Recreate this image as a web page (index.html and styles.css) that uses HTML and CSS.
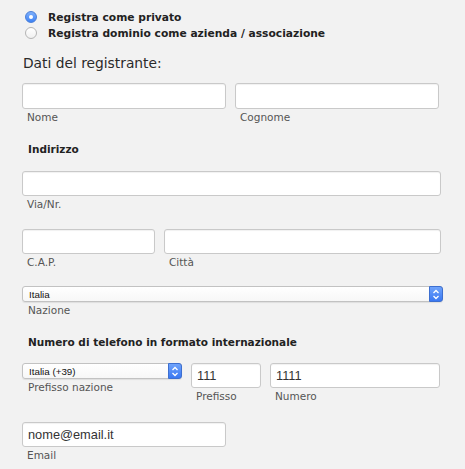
FILE: index.html
```html
<!DOCTYPE html>
<html lang="it">
<head>
<meta charset="utf-8">
<title>Registrazione</title>
<link rel="stylesheet" href="styles.css">
</head>
<body>
<form class="form">
  <div class="radios">
    <label class="radio-row"><span class="radio checked"></span><span class="radio-text">Registra come privato</span></label>
    <label class="radio-row"><span class="radio"></span><span class="radio-text">Registra dominio come azienda / associazione</span></label>
  </div>

  <h2 class="title">Dati del registrante:</h2>

  <div class="row row-names">
    <div class="field w-half"><div class="input"></div><div class="label">Nome</div></div>
    <div class="field w-half"><div class="input"></div><div class="label">Cognome</div></div>
  </div>

  <h3 class="section">Indirizzo</h3>

  <div class="row row-via">
    <div class="field w-full"><div class="input short"></div><div class="label">Via/Nr.</div></div>
  </div>

  <div class="row row-cap">
    <div class="field w-cap"><div class="input short"></div><div class="label">C.A.P.</div></div>
    <div class="field w-city"><div class="input short"></div><div class="label">Città</div></div>
  </div>

  <div class="row row-nation">
    <div class="field w-select">
      <div class="select"><span class="select-text">Italia</span><span class="select-btn"><svg width="8" height="11" viewBox="0 0 8 11"><path d="M1.5 4 L4 1.5 L6.5 4 M1.5 7 L4 9.5 L6.5 7" fill="none" stroke="#fff" stroke-width="1.3"/></svg></span></div>
      <div class="label label-sel">Nazione</div>
    </div>
  </div>

  <h3 class="section section-phone">Numero di telefono in formato internazionale</h3>

  <div class="row row-phone">
    <div class="field w-psel">
      <div class="select"><span class="select-text">Italia (+39)</span><span class="select-btn"><svg width="8" height="11" viewBox="0 0 8 11"><path d="M1.5 4 L4 1.5 L6.5 4 M1.5 7 L4 9.5 L6.5 7" fill="none" stroke="#fff" stroke-width="1.3"/></svg></span></div>
      <div class="label label-sel">Prefisso nazione</div>
    </div>
    <div class="field w-pref"><div class="input tall"><span class="value">111</span></div><div class="label">Prefisso</div></div>
    <div class="field w-num"><div class="input tall"><span class="value">1111</span></div><div class="label">Numero</div></div>
  </div>

  <div class="row row-email">
    <div class="field w-half"><div class="input short"><span class="value">nome@email.it</span></div><div class="label">Email</div></div>
  </div>
</form>
</body>
</html>
```
FILE: styles.css
```css
* { box-sizing: border-box; }
html, body { margin: 0; padding: 0; }
body {
  background: #f2f2f2;
  width: 465px;
  height: 469px;
  overflow: hidden;
  font-family: "DejaVu Sans", Verdana, sans-serif;
  color: #222;
}
.form { padding: 9px 0 0 22px; }

.radios { padding-left: 3px; }
.radio-row { display: flex; align-items: center; height: 16px; }
.radio {
  width: 12px; height: 12px; border-radius: 50%;
  background: linear-gradient(#ffffff, #f0f0f0);
  border: 1px solid #b5b5b5;
  margin-right: 11px;
  position: relative;
  flex: none;
}
.radio.checked {
  background: linear-gradient(#7fb0fb, #3d82f5);
  border-color: #4a7fd8;
}
.radio.checked::after {
  content: "";
  position: absolute;
  left: 3px; top: 3px;
  width: 4px; height: 4px;
  border-radius: 50%;
  background: #fff;
}
.radio-text { font-size: 10.7px; font-weight: bold; color: #222; }

.title {
  margin: 13px 0 0 1px;
  font-size: 13.8px;
  font-weight: normal;
  line-height: 18px;
  color: #2a2a2a;
}

.row { display: flex; }
.field { display: flex; flex-direction: column; flex: none; }
.w-half { width: 204px; }
.w-full { width: 419px; }
.w-cap { width: 133px; }
.w-city { width: 277px; }
.w-select { width: 421px; }
.w-psel { width: 160px; }
.w-pref { width: 70px; }
.w-num { width: 170px; }

.row-names { margin-top: 11px; gap: 9px; }
.row-via { margin-top: 15px; }
.row-cap { margin-top: 18px; gap: 9px; }
.row-nation { margin-top: 17px; }
.row-phone { margin-top: 14px; gap: 9px; }
.row-email { margin-top: 19px; }

.input {
  height: 26px;
  background: #fff;
  border: 1px solid #c9c9c9;
  border-radius: 3px;
  box-shadow: inset 0 1px 1px rgba(0,0,0,0.06);
  display: flex;
  align-items: center;
  padding-left: 5px;
}
.input.short { height: 25px; }
.input.tall { height: 25px; }
.value {
  font-family: "Liberation Sans", Arial, sans-serif;
  font-size: 12.8px;
  color: #333;
}

.label {
  font-size: 10.5px;
  color: #555;
  line-height: 14px;
  margin-top: 1px;
  padding-left: 5px;
}
.label-sel { margin-top: 1px; padding-left: 6px; }

.section {
  margin: 0;
  padding-left: 6px;
  font-size: 10.5px;
  font-weight: bold;
  color: #222;
  line-height: 14px;
}
.row-names + .section { margin-top: 18px; }
.section-phone { margin-top: 18px; }

.select {
  height: 16px;
  background: linear-gradient(#ffffff, #f7f7f7);
  border: 1px solid #c2c2c2;
  border-radius: 3px;
  box-shadow: 0 1px 1px rgba(0,0,0,0.08);
  display: flex;
  align-items: center;
  justify-content: space-between;
}
.select-text {
  font-family: "Liberation Sans", Arial, sans-serif;
  font-size: 9.8px;
  color: #111;
  padding-left: 6px;
}
.select-btn {
  width: 14px;
  height: 16px;
  margin: -1px -1px -1px 0;
  border-radius: 0 3px 3px 0;
  background: linear-gradient(#6fa3fb, #3a78f2);
  border: 1px solid #3d6fd0;
  display: flex;
  align-items: center;
  justify-content: center;
}
```
